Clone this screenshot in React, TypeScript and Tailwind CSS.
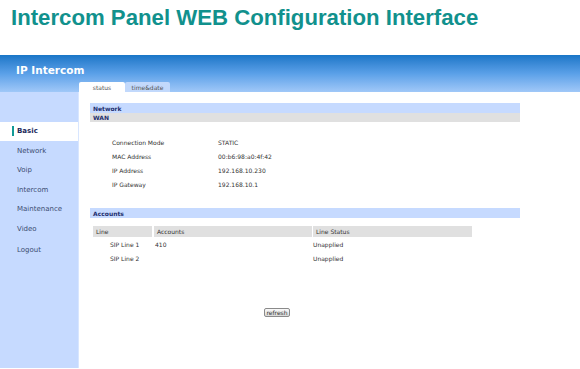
const navItems = ["Basic", "Network", "Voip", "Intercom", "Maintenance", "Video"];

const wanRows = [
  ["Connection Mode", "STATIC"],
  ["MAC Address", "00:b6:98:a0:4f:42"],
  ["IP Address", "192.168.10.230"],
  ["IP Gateway", "192.168.10.1"],
];

const lines = [
  { line: "SIP Line 1", account: "410", status: "Unapplied" },
  { line: "SIP Line 2", account: "", status: "Unapplied" },
];

function SideItem({ label, active }: { label: string; active?: boolean }) {
  return (
    <div
      className={
        active
          ? "h-[19.5px] flex items-center bg-white pl-[12px] text-[7px] font-bold text-[#1b2a5c]"
          : "h-[19.5px] flex items-center pl-[17px] text-[7px] text-[#3c4d72]"
      }
    >
      {active && <span className="w-[2px] h-[10px] bg-[#129a96] mr-[3px]" />}
      {label}
    </div>
  );
}

export default function App() {
  return (
    <div className="w-[580px] h-[369px] bg-white overflow-hidden font-['DejaVu_Sans',Verdana,sans-serif]">
      <div className="h-[55px] pt-[6px] pl-[11px]">
        <h1 className="font-['Liberation_Sans',Arial,sans-serif] font-bold text-[22.2px] leading-[23px] text-[#11918d]">
          Intercom Panel WEB Configuration Interface
        </h1>
      </div>

      <div className="h-[37px] bg-linear-to-b from-[#1876c7] via-[#5aa0e8] to-[#a0c8f8] pl-[16px] pt-[9px] flex flex-col">
        <div className="text-[10.5px] leading-[12px] font-bold text-white">IP Intercom</div>
        <div className="mt-[6px] ml-[63px] flex h-[10px] text-[6px] text-[#555]">
          <div className="w-[46px] bg-white rounded-t-[2px] flex items-center justify-center">status</div>
          <div className="w-[45px] bg-[#c2d9fc] rounded-t-[2px] flex items-center justify-center">time&amp;date</div>
        </div>
      </div>

      <div className="flex">
        <div className="w-[79px] h-[276px] bg-[#c6daff] border-r border-[#d8e6ff] pt-[29.5px]">
          {navItems.map((n) => (
            <SideItem key={n} label={n} active={n === "Basic"} />
          ))}
          <div className="mt-[1.5px]">
            <SideItem label="Logout" />
          </div>
        </div>

        <div className="flex-1 pl-[11px] pt-[11px] text-[6px] text-[#333]">
          <div className="w-[430px]">
            <div className="h-[10px] bg-[#c6daff] flex items-center pl-[3px] font-bold text-[#1e2f6e]">Network</div>
            <div className="h-[9px] bg-[#e0e0e0] flex items-center pl-[3px] font-bold text-[#1e2f6e]">WAN</div>

            <div className="mt-[13px] pl-[22px]">
              {wanRows.map(([k, v]) => (
                <div key={k} className="h-[14px] flex items-center">
                  <span className="w-[106px]">{k}</span>
                  <span>{v}</span>
                </div>
              ))}
            </div>

            <div className="mt-[17px] h-[10px] bg-[#c6daff] flex items-center pl-[3px] font-bold text-[#1e2f6e]">Accounts</div>

            <div className="mt-[8px] ml-[3px]">
              <div className="flex h-[11px]">
                <div className="w-[59px] bg-[#e0e0e0] flex items-center pl-[3px]">Line</div>
                <div className="w-[158px] ml-[2px] bg-[#e0e0e0] flex items-center pl-[3px]">Accounts</div>
                <div className="w-[159px] ml-[1px] bg-[#e0e0e0] flex items-center pl-[3px]">Line Status</div>
              </div>
              {lines.map((l) => (
                <div key={l.line} className="flex h-[14px] items-center first:mt-[1px]">
                  <div className="w-[61px] pl-[17px]">{l.line}</div>
                  <div className="w-[159px] pl-[1px]">{l.account}</div>
                  <div>{l.status}</div>
                </div>
              ))}
            </div>

            <div className="mt-[43px] pl-[174px]">
              <button className="h-[9px] w-[26px] border border-[#8a8a8a] rounded-[2px] bg-linear-to-b from-[#fafafa] to-[#d8d8d8] text-[6px] leading-[7px] text-[#333] flex items-center justify-center">
                refresh
              </button>
            </div>
          </div>
        </div>
      </div>
    </div>
  );
}
